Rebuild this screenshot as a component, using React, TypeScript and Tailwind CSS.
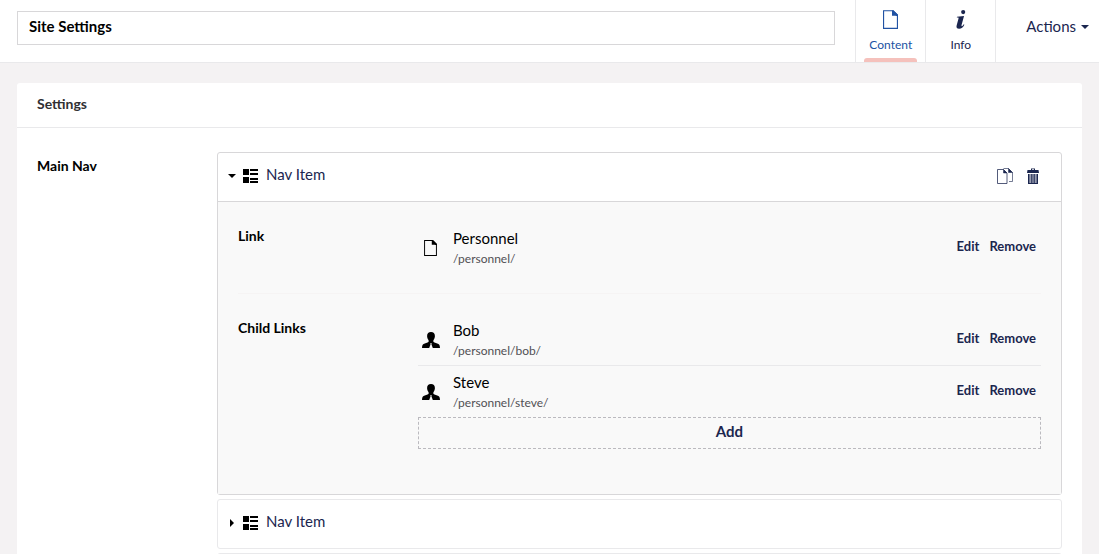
import { useState } from "react";
import type { ReactNode } from "react";

type IconProps = { className?: string };

type PickedItem = {
  name: string;
  url: string;
  icon: "document" | "user";
};

const linkItems: PickedItem[] = [
  { name: "Personnel", url: "/personnel/", icon: "document" },
];

const childItems: PickedItem[] = [
  { name: "Bob", url: "/personnel/bob/", icon: "user" },
  { name: "Steve", url: "/personnel/steve/", icon: "user" },
];

function DocumentIcon({ className }: IconProps) {
  return (
    <svg viewBox="0 0 16 20" className={className} fill="currentColor" aria-hidden="true">
      <path fillRule="evenodd" d="M0 0h11l5 5v15H0zM1.200 1.200v17.600h13.600V6H9.600V1.200z" />
      <path d="M9.600 0H11l5 5v1.200H14z" />
    </svg>
  );
}

function CopyIcon({ className }: IconProps) {
  return (
    <svg viewBox="0 0 16 16" className={className} fill="none" stroke="currentColor" aria-hidden="true">
      <path d="M.5 1.500h6l3.500 3.500v10.500H.5z" strokeOpacity=".75" />
      <path d="M6.500 1.500V5H10z" fill="currentColor" strokeWidth=".5" />
      <path d="M6.500.5h5l4 4v9H12" strokeOpacity=".6" />
      <path d="M11.500.5v4h4z" fill="currentColor" strokeWidth=".5" />
    </svg>
  );
}

function TrashIcon({ className }: IconProps) {
  return (
    <svg viewBox="0 0 12 16" className={className} fill="currentColor" aria-hidden="true">
      <path d="M4 2V.5h4V2h3.500l.5 3H0L.5 2zM5 1.200V2h2v-.8z" />
      <path d="M1 6h10v10H1z" fillOpacity=".45" />
      <path d="M1 6h1.300v10H1zM4.300 6h1v9h-1zM6.700 6h1v9h-1zM9.700 6H11v10H9.700zM1 15h10v1H1z" />
    </svg>
  );
}

function UserIcon({ className }: IconProps) {
  return (
    <svg viewBox="0 0 18 16" className={className} fill="currentColor" aria-hidden="true">
      <path d="M9 0c2.500 0 3.900 1.500 3.900 4 0 1.500-.5 2.700-1.200 3.700-.3.500-.4 1-.4 1.500 0 .6.400 1 1.200 1.300l3.400 1.300c1.400.6 2 1.600 2.100 4.200h-7.200l-1.400-3.700.5-1.100H8.100l.5 1.100-1.400 3.700H0c.1-2.600.7-3.600 2.100-4.200l3.400-1.300c.8-.3 1.200-.7 1.200-1.300 0-.5-.1-1-.4-1.500C5.600 6.700 5.100 5.500 5.100 4 5.100 1.500 6.500 0 9 0z" />
    </svg>
  );
}

function ThumbListIcon({ className }: IconProps) {
  return (
    <svg viewBox="0 0 15 14" className={className} fill="currentColor" shapeRendering="crispEdges" aria-hidden="true">
      <path d="M0 0h6v6H0zM7 0h8v2H7zM7 4h8v2H7zM0 8h6v6H0zM7 9h8v2H7zM7 12h8v2H7z" />
    </svg>
  );
}

function InfoIcon({ className }: IconProps) {
  return (
    <svg viewBox="0 0 10 20" className={className} fill="currentColor" aria-hidden="true">
      <circle cx="7.300" cy="2.200" r="2.200" />
      <path d="M.8 7.200 8.200 6.400 5.600 15.900c-.3 1.100.1 1.400.8.900.6-.4 1-.9 1.500-1.700l.7.500C7.300 18.200 5.400 19.800 3 19.800c-2.200 0-3.200-1.400-2.600-3.500L2.400 9c.2-.8 0-1-.6-1H.6z" />
    </svg>
  );
}

function Caret({ open }: { open: boolean }) {
  return (
    <svg viewBox="0 0 8 8" className="size-2" fill="#000" aria-hidden="true">
      {open ? <path d="M0 2h8L4 6z" /> : <path d="M2 0v8l4-4z" />}
    </svg>
  );
}

function PickerRow({ item, divided }: { item: PickedItem; divided: boolean }) {
  return (
    <li className={`flex items-start pt-1.5 pb-1 ${divided ? "border-b border-[#e9e9eb]" : ""}`}>
      <span className="flex h-10 w-[35px] items-center">
        {item.icon === "document" ? (
          <DocumentIcon className="ml-1.5 h-4 w-[13px]" />
        ) : (
          <UserIcon className="ml-1 h-4 w-[18px]" />
        )}
      </span>
      <div className="min-w-0 flex-1">
        <p className="truncate text-[15px] leading-5">{item.name}</p>
        <p className="truncate text-xs leading-[21px] text-[#515054]">{item.url}</p>
      </div>
      <div className="flex gap-2.5 pt-2 pr-[5px] text-[13px] leading-5 font-bold text-[#1b264f]">
        <button type="button">Edit</button>
        <button type="button">Remove</button>
      </div>
    </li>
  );
}

function Property({ label, children }: { label: string; children: ReactNode }) {
  return (
    <div className="flex py-5">
      <h3 className="w-[180px] shrink-0 pt-1 text-sm leading-5 font-bold">{label}</h3>
      <div className="min-w-0 flex-1">{children}</div>
    </div>
  );
}

function PickerList({ items }: { items: PickedItem[] }) {
  return (
    <ul>
      {items.map((item, i) => (
        <PickerRow key={item.url} item={item} divided={i < items.length - 1} />
      ))}
    </ul>
  );
}

function NavItem({ defaultOpen = false }: { defaultOpen?: boolean }) {
  const [open, setOpen] = useState(defaultOpen);

  return (
    <div className={`rounded-[3px] border ${open ? "border-[#d8d7d9]" : "border-[#e9e9eb]"}`}>
      <div className="flex h-12 items-center">
        <button
          type="button"
          aria-expanded={open}
          onClick={() => setOpen(!open)}
          className="flex h-full flex-1 items-center pb-0.5 pl-2.5 text-left"
        >
          <Caret open={open} />
          <ThumbListIcon className="ml-[7px] h-3.5 w-[15px] text-black" />
          <span className="ml-2 pb-1 text-[15px] leading-5 text-[#1b264f]">Nav Item</span>
        </button>
        {open && (
          <div className="flex items-center gap-3.5 pr-[22px] pb-0.5 text-[#1b264f]">
            <button type="button" aria-label="Copy">
              <CopyIcon className="size-4" />
            </button>
            <button type="button" aria-label="Delete">
              <TrashIcon className="h-4 w-3" />
            </button>
          </div>
        )}
      </div>
      {open && (
        <div className="border-t border-[#d8d7d9] bg-[#f9f9f9] px-5 pb-[25px]">
          <Property label="Link">
            <PickerList items={linkItems} />
          </Property>
          <div className="border-t border-[#f6f4f4]">
            <Property label="Child Links">
              <PickerList items={childItems} />
              <button
                type="button"
                className="h-8 w-full border border-dashed border-[#bbbabf] pb-1 text-[15px] leading-5 font-bold text-[#1b264f]"
              >
                Add
              </button>
            </Property>
          </div>
        </div>
      )}
    </div>
  );
}

export default function App() {
  const [title, setTitle] = useState("Site Settings");

  return (
    <div className="flex h-screen flex-col bg-[#f4f2f3] font-['Lato',sans-serif] text-black">
      <header className="flex h-[63px] shrink-0 border-b border-[#e9e9eb] bg-white">
        <div className="flex-1 pt-[11px] pr-5 pl-[17px]">
          <input
            aria-label="Name"
            value={title}
            onChange={(e) => setTitle(e.target.value)}
            className="h-[34px] w-full border border-[#d8d7d9] px-[11px] pb-1 text-[15px] font-bold outline-none"
          />
        </div>
        <nav className="flex text-xs leading-4">
          <button
            type="button"
            className="relative flex w-[70px] flex-col items-center border-l border-[#e9e9eb] pt-2.5 text-[#2152a3]"
          >
            <DocumentIcon className="h-[19px] w-[15px]" />
            <span className="mt-2">Content</span>
            <span className="absolute inset-x-2 bottom-0 h-1 rounded-t-[3px] bg-[#f5c1bc]" />
          </button>
          <button
            type="button"
            className="flex w-[71px] flex-col items-center border-x border-[#e9e9eb] pt-2.5 text-[#1b264f]"
          >
            <InfoIcon className="h-[19px] w-2.5" />
            <span className="mt-2">Info</span>
          </button>
        </nav>
        <button
          type="button"
          className="flex items-center gap-[5px] pr-2.5 pb-2 pl-[30px] text-[15px] leading-5 text-[#1b264f]"
        >
          <span className="pb-0.5">Actions</span>
          <svg viewBox="0 0 8 4" className="h-1 w-2" fill="currentColor" aria-hidden="true">
            <path d="M0 0h8L4 4z" />
          </svg>
        </button>
      </header>

      <main className="min-h-0 flex-1 overflow-y-auto px-[17px] pt-5 [scrollbar-width:none]">
        <section className="rounded-[3px] bg-white">
          <h2 className="border-b border-[#e9e9eb] px-5 pt-[11px] pb-[13px] text-sm leading-5 font-bold text-[#303033]">
            Settings
          </h2>
          <div className="flex px-5 pt-6 pb-5">
            <h3 className="w-[180px] shrink-0 pt-1 text-sm leading-5 font-bold">Main Nav</h3>
            <div className="flex min-w-0 flex-1 flex-col gap-1">
              <NavItem defaultOpen />
              <NavItem />
              <NavItem />
            </div>
          </div>
        </section>
      </main>
    </div>
  );
}
